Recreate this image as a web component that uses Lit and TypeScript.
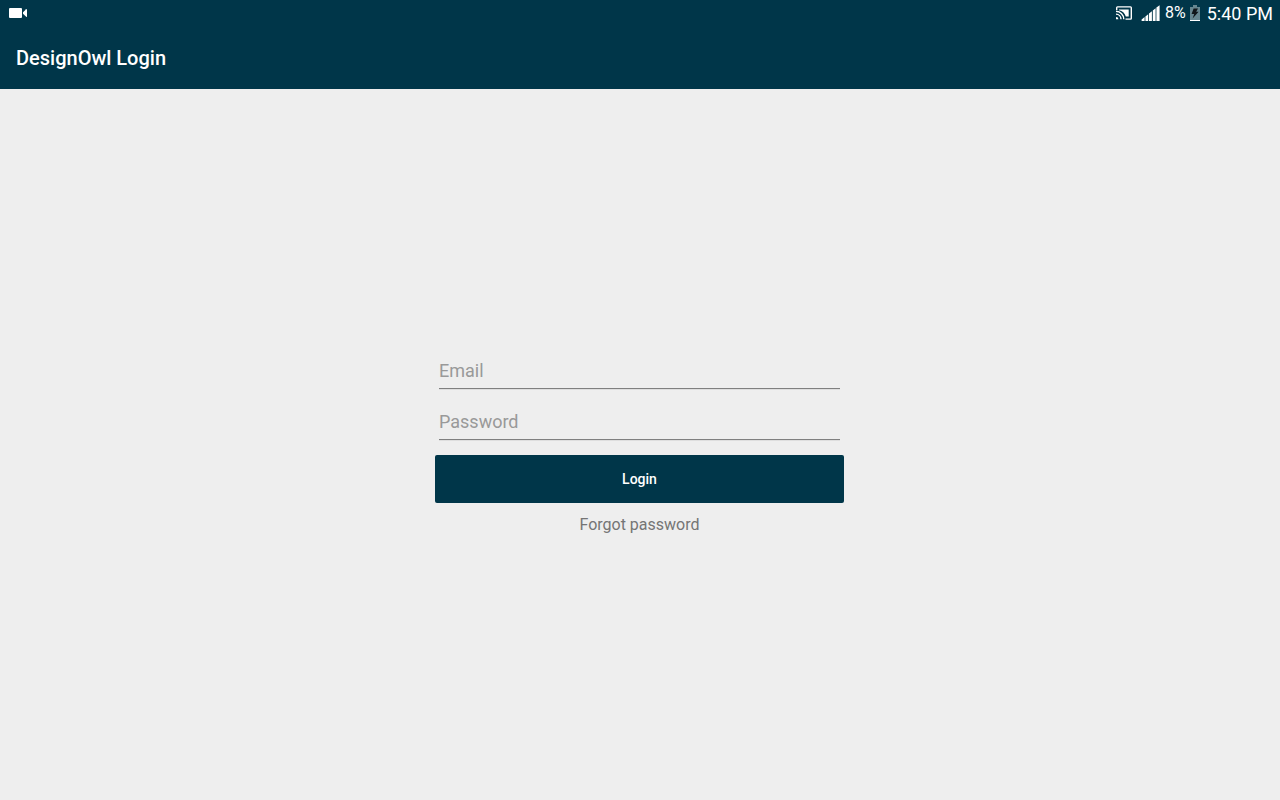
import { LitElement, html, css } from "lit";
import { customElement } from "lit/decorators.js";

@customElement("status-bar")
class StatusBar extends LitElement {
  static styles = css`
    :host {
      display: flex;
      align-items: center;
      justify-content: space-between;
      height: 27px;
      padding: 0 7px 0 8px;
      color: #fff;
      font-family: Roboto, sans-serif;
    }
    svg {
      display: block;
    }
    .group,
    .icons {
      display: flex;
      align-items: center;
    }
    .icons {
      padding-bottom: 2px;
    }
    .signal {
      margin-left: 8px;
    }
    .level {
      margin-left: 5px;
      font-size: 16px;
      line-height: 20px;
    }
    .battery {
      margin: 0 7px 0 4px;
    }
    .clock {
      font-size: 18px;
      line-height: 26px;
    }
  `;

  render() {
    return html`
      <div class="icons">
        <svg width="20" height="12" viewBox="0 0 20 12" fill="#fff" aria-hidden="true">
          <rect x="1" y="1" width="13" height="10" rx="1"></rect>
          <path d="M15 5.2 18.2 2.3Q19 1.8 19 2.6V9.4Q19 10.2 18.2 9.7L15 6.8Z"></path>
        </svg>
      </div>
      <div class="group">
        <div class="icons">
          <svg width="18" height="14" viewBox="0 0 18 14" fill="none" stroke="#fff" stroke-width="1.4" aria-hidden="true">
            <path d="M1.7 4V1.7Q1.7 .9 2.5 .9H15.5Q16.3 .9 16.3 1.7V12.3Q16.3 13.1 15.5 13.1H10.5"></path>
            <path d="M1 5.2A8 8 0 0 1 8.8 13.3M1 8.1A5.2 5.2 0 0 1 6 13.3"></path>
            <path d="M1 10.9A2.4 2.4 0 0 1 3.4 13.3H1Z" fill="#fff" stroke="none"></path>
            <path d="M4 3.6H13.7V10.5H10.8C9.9 7.2 7.3 4.9 4 4.3Z" fill="#fff" stroke="none"></path>
          </svg>
          <svg class="signal" width="19" height="16" viewBox="0 0 19 16" fill="#fff" aria-hidden="true">
            <path d="M.6 16V14.4L3.6 12V16ZM4.4 16V11.6L7.2 9.2V16ZM8 16V8.6L10.9 6.2V16ZM11.8 16V5.6L14.6 3.2V16ZM15.4 16V2.6L18.6 .2V16Z"></path>
          </svg>
          <span class="level">8%</span>
          <svg class="battery" width="10" height="16" viewBox="0 0 10 16" aria-hidden="true">
            <path d="M3 0H7V2H10V16H0V2H3Z" fill="#668690"></path>
            <rect y="15" width="10" height="1" fill="#fff"></rect>
            <path d="M3.6 3.4H8L6.2 6.8H8.6L2.6 13.4 4.2 9H1.6Z" fill="#10161a"></path>
          </svg>
        </div>
        <span class="clock">5:40 PM</span>
      </div>
    `;
  }
}

@customElement("login-form")
class LoginForm extends LitElement {
  static styles = css`
    :host {
      display: block;
      width: 100%;
      max-width: 409px;
      font-family: Roboto, sans-serif;
    }
    form {
      display: flex;
      flex-direction: column;
    }
    input {
      box-sizing: border-box;
      height: 39px;
      margin: 0 4px 12px;
      padding: 2px 0 0;
      border: 0;
      border-bottom: 1px solid #7f7f7f;
      border-radius: 0;
      box-shadow: 0 1px 0 #dedede;
      outline: none;
      background: transparent;
      color: #212121;
      font: 18px/24px Roboto, sans-serif;
    }
    input::placeholder {
      color: #999;
      opacity: 1;
    }
    button {
      height: 48px;
      margin: 3px 0 8px;
      padding: 0;
      border: 0;
      border-radius: 2px;
      background: #003649;
      color: #fff;
      font: 500 14px/20px Roboto, sans-serif;
      cursor: pointer;
    }
    a {
      align-self: center;
      color: #757575;
      font-size: 16px;
      line-height: 28px;
      text-decoration: none;
    }
  `;

  render() {
    return html`
      <form @submit=${(e: Event) => e.preventDefault()}>
        <input type="email" name="email" placeholder="Email" aria-label="Email" />
        <input type="password" name="password" placeholder="Password" aria-label="Password" />
        <button type="submit">Login</button>
        <a href="#forgot">Forgot password</a>
      </form>
    `;
  }
}

@customElement("app-root")
class AppRoot extends LitElement {
  static styles = css`
    :host {
      display: flex;
      flex-direction: column;
      min-height: 100vh;
      background: #eee;
      font-family: Roboto, sans-serif;
    }
    header {
      background: #003649;
      color: #fff;
    }
    h1 {
      margin: 0;
      padding: 17px 16px;
      font-size: 20px;
      font-weight: 500;
      line-height: 28px;
    }
    main {
      display: flex;
      flex: 1;
      align-items: center;
      justify-content: center;
      padding-right: 1px;
    }
  `;

  render() {
    return html`
      <header>
        <status-bar></status-bar>
        <h1>DesignOwl Login</h1>
      </header>
      <main><login-form></login-form></main>
    `;
  }
}
